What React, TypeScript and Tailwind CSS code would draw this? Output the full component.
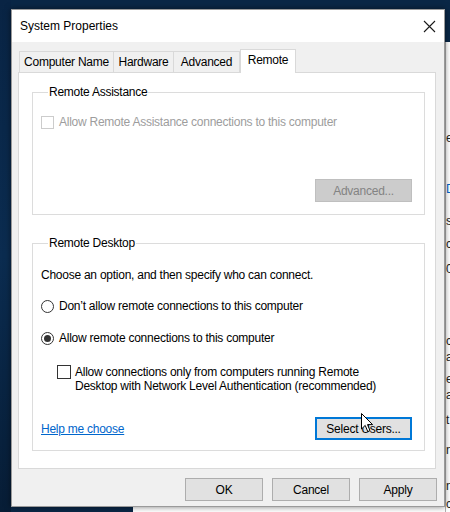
import React from 'react';

const font = { fontFamily: '"Segoe UI", "Liberation Sans", Arial, sans-serif' };

function Tab({ label, w, active }: { label: string; w: string; active?: boolean }) {
  if (active) {
    return (
      <div className={`${w} h-[24px] -mt-[2px] -mb-[1px] bg-white border border-b-0 border-[#d9d9d9] flex items-center justify-center pb-[3px] relative z-10`}>
        {label}
      </div>
    );
  }
  return (
    <div className={`${w} h-[21px] bg-[#f0f0f0] border border-b-0 border-r-0 border-[#d9d9d9] flex items-center justify-center`}>
      {label}
    </div>
  );
}

function WinButton({ label, disabled, focused, w = 'w-[97px]' }: { label: React.ReactNode; disabled?: boolean; focused?: boolean; w?: string }) {
  const cls = disabled
    ? 'bg-[#cccccc] border-[#bfbfbf] text-[#838383]'
    : focused
    ? 'bg-[#e1e1e1] border-[#0078d7] border-2 text-black'
    : 'bg-[#e1e1e1] border-[#adadad] text-black';
  return (
    <div className={`${w} h-[23px] border ${cls} flex items-center justify-center`}>
      {label}
    </div>
  );
}

function Cursor() {
  return (
    <svg width="13" height="20" viewBox="0 0 13 20" className="absolute left-[361px] top-[413px] z-20">
      <path d="M0.5 0.5 L0.5 16 L4.2 12.4 L6.8 18.6 L9 17.6 L6.5 11.6 L11.6 11.6 Z" fill="#fff" stroke="#000" strokeWidth="1" strokeLinejoin="miter" />
    </svg>
  );
}

export default function App() {
  return (
    <div className="w-[450px] h-[512px] overflow-hidden relative flex bg-[#0a2746] text-[12px] leading-[16px]" style={font}>
      {/* desktop strip on the left */}
      <div className="w-[11px] h-full bg-gradient-to-b from-[#092444] via-[#0b2c50] to-[#071d36]" />

      <div className="w-[434px] flex flex-col">
        {/* dialog */}
        <div className="w-[434px] h-[498px] mt-[9px] bg-[#f0f0f0] border border-[#9a9a9a] flex flex-col shadow-[0_0_6px_rgba(0,0,0,0.5)] relative z-10">
          <div className="h-[32px] bg-white flex items-center justify-between pl-[8px] pr-[8px]">
            <span className="text-[12px] text-black">System Properties</span>
            <svg width="13" height="13" viewBox="0 0 13 13">
              <path d="M1 1 L12 12 M12 1 L1 12" stroke="#1a1a1a" strokeWidth="1.1" />
            </svg>
          </div>

          <div className="pl-[6px] pt-[9px] flex flex-col tracking-[-0.25px]">
            <div className="flex items-end text-black pl-[1px]">
              <Tab label="Computer Name" w="w-[94px]" />
              <Tab label="Hardware" w="w-[60px]" />
              <div className="border-r border-[#d9d9d9]">
                <Tab label="Advanced" w="w-[66px]" />
              </div>
              <Tab label="Remote" w="w-[56px]" active />
            </div>

            <div className="w-[418px] h-[397px] bg-white border border-[#d9d9d9] pl-[13px] pt-[11px] flex flex-col gap-[20px]">
              <fieldset className="w-[393px] h-[131px] border border-[#dcdcdc] px-[8px] flex flex-col">
                <legend className="ml-[7px] px-[1px] text-black">Remote Assistance</legend>
                <div className="flex items-center gap-[5px] mt-[14px] text-[#9d9d9d]">
                  <div className="w-[13px] h-[13px] border border-[#cccccc] bg-white" />
                  <span>Allow Remote Assistance connections to this computer</span>
                </div>
                <div className="flex justify-end mt-[49px] pr-[4px]">
                  <WinButton label="Advanced..." disabled />
                </div>
              </fieldset>

              <fieldset className="w-[393px] h-[216px] border border-[#dcdcdc] px-[8px] flex flex-col text-black">
                <legend className="ml-[7px] px-[1px]">Remote Desktop</legend>
                <div className="mt-[16px]">Choose an option, and then specify who can connect.</div>
                <div className="flex items-center gap-[5px] mt-[15px]">
                  <div className="w-[13px] h-[13px] rounded-full border border-[#333333] bg-white" />
                  <span>Don’t allow remote connections to this computer</span>
                </div>
                <div className="flex items-center gap-[5px] mt-[16px]">
                  <div className="w-[13px] h-[13px] rounded-full border border-[#333333] bg-white flex items-center justify-center">
                    <div className="w-[7px] h-[7px] rounded-full bg-[#333333]" />
                  </div>
                  <span>Allow remote connections to this computer</span>
                </div>
                <div className="flex items-start gap-[4px] mt-[19px] pl-[16px] leading-[14px]">
                  <div className="w-[14px] h-[14px] border border-[#333333] bg-white shrink-0" />
                  <span>
                    Allow connections only from computers running Remote
                    <br />
                    Desktop with Network Level Authentication (recommended)
                  </span>
                </div>
                <div className="flex items-center justify-between mt-[24px] pr-[4px]">
                  <span className="text-[#0066cc] underline">Help me choose</span>
                  <WinButton label="Select Users..." focused />
                </div>
              </fieldset>
            </div>

            <div className="flex justify-end gap-[9px] pr-[7px] mt-[9px] text-black">
              <WinButton label="OK" w="w-[78px]" />
              <WinButton label="Cancel" w="w-[78px]" />
              <WinButton label="Apply" w="w-[78px]" />
            </div>
          </div>
        </div>
        {/* what shows below the dialog */}
        <div className="flex-1 flex">
          <div className="w-[122px] bg-[#0a2746]" />
          <div className="flex-1 bg-white" />
        </div>
      </div>

      {/* window behind, on the right */}
      <div className="flex-1 flex flex-col overflow-hidden">
        <div className="h-[42px] bg-[#0a2746]" />
        <div className="flex-1 bg-white border-l border-[#b0b0b0] text-[12px] leading-[16px] text-[#222] flex flex-col">
          <div className="mt-[88px]">e</div>
          <div className="mt-[35px] text-[#0066cc]">D</div>
          <div className="mt-[16px]">s</div>
          <div className="mt-[7px]">c</div>
          <div className="mt-[9px]">0</div>
          <div className="mt-[56px]">c</div>
          <div className="mt-[0px]">a</div>
          <div className="mt-[6px]">e</div>
          <div className="mt-[0px]">a</div>
          <div className="mt-[9px]">t</div>
          <div className="mt-[14px]">n</div>
          <div className="mt-[20px]">n</div>
          <div className="mt-[2px]">c</div>
        </div>
      </div>

      <Cursor />
    </div>
  );
}
